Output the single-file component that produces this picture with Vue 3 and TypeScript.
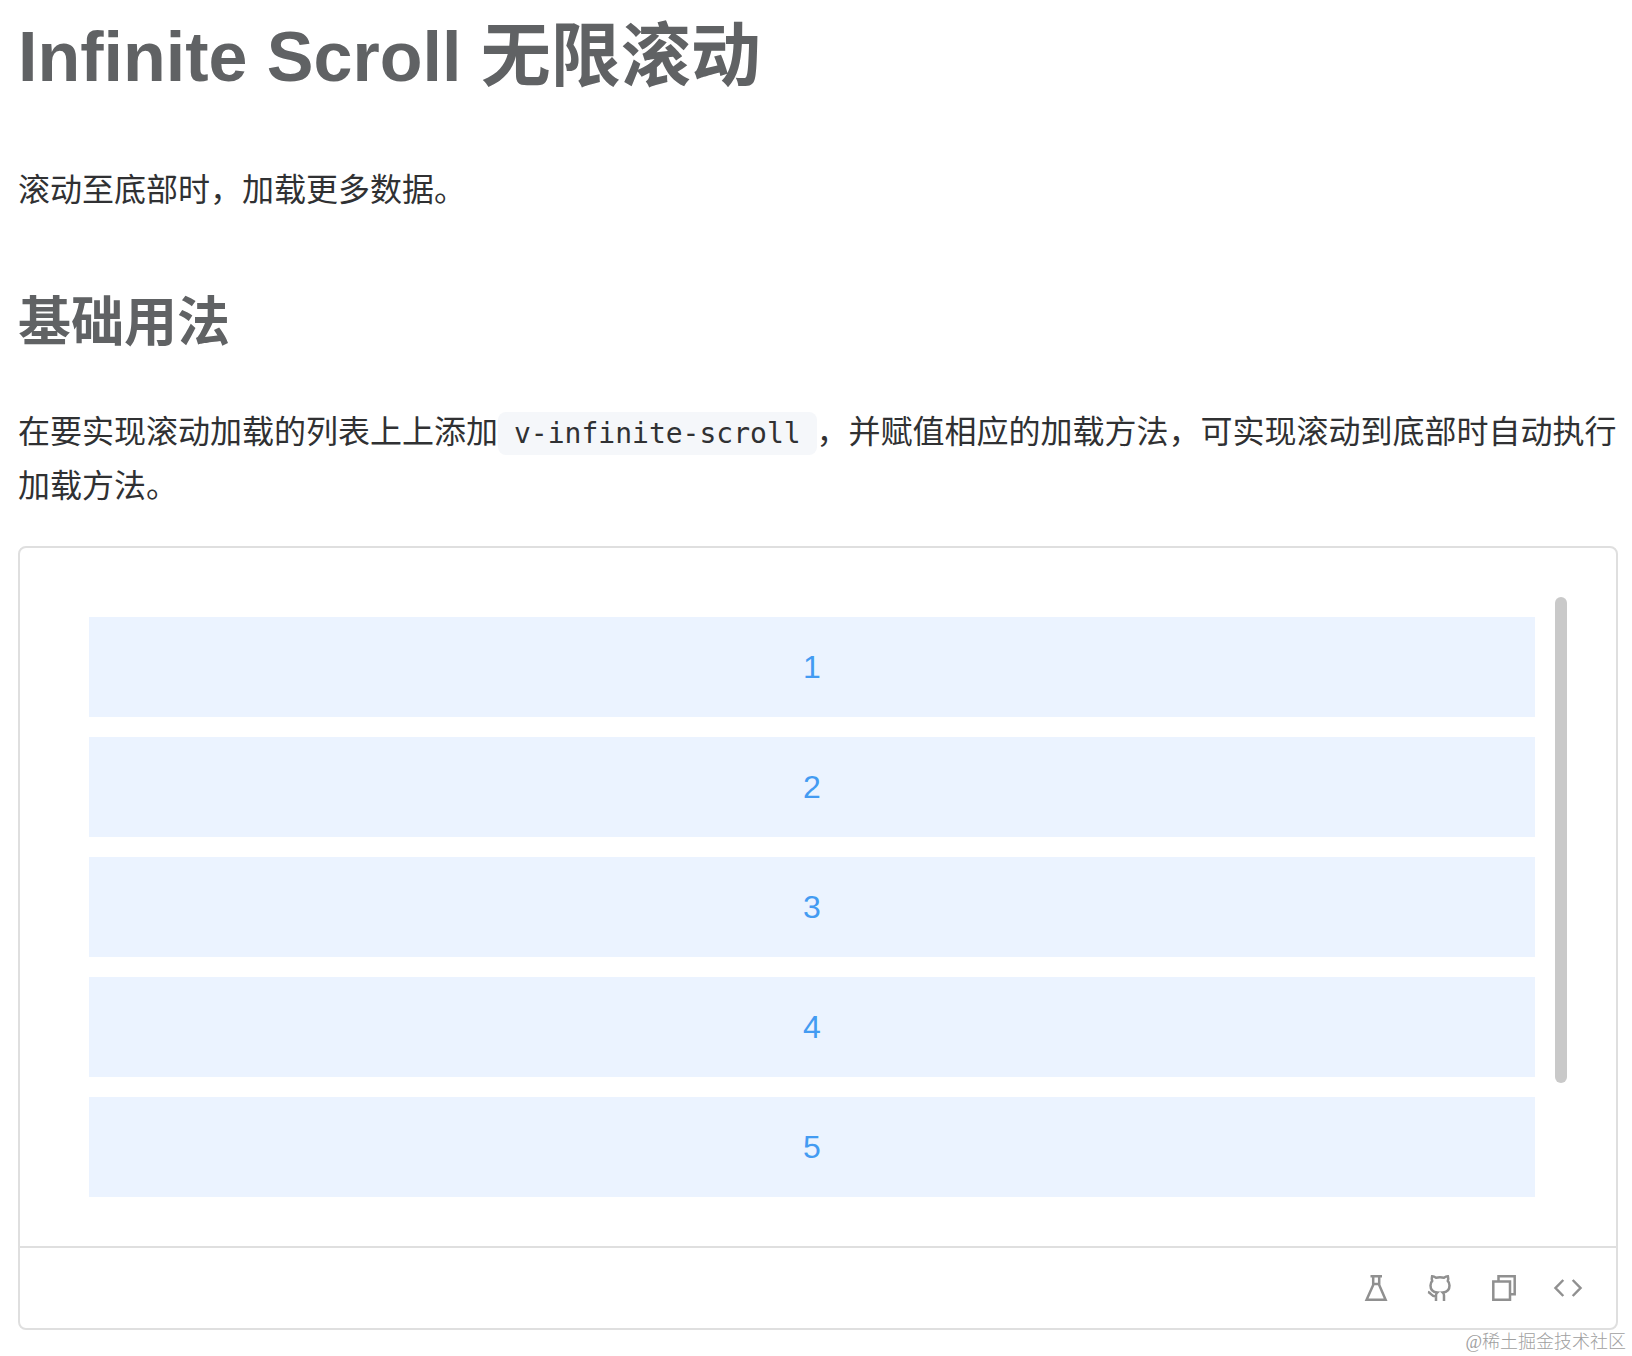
<script setup lang="ts">
import { computed, ref } from 'vue'

const ROW_STEP = 120
const LIST_HEIGHT = 600

const count = ref(5)
const scrollTop = ref(0)

// One spare row of space stays below the loaded rows so that there is always something to scroll into.
const contentHeight = computed(() => (count.value + 1) * ROW_STEP + 20)
const thumbHeight = computed(() => Math.round((LIST_HEIGHT * LIST_HEIGHT) / contentHeight.value))
const thumbTop = computed(() => Math.round((scrollTop.value * LIST_HEIGHT) / contentHeight.value))

function onScroll(event: Event) {
  const el = event.target as HTMLElement
  scrollTop.value = el.scrollTop
  if (el.scrollTop + el.clientHeight >= el.scrollHeight - 1) count.value += 2
}
</script>

<template>
  <main class="doc">
    <h1>Infinite Scroll 无限滚动</h1>
    <p class="intro">滚动至底部时，加载更多数据。</p>

    <h2>基础用法</h2>
    <p class="usage">在要实现滚动加载的列表上上添加<code>v-infinite-scroll</code>，并赋值相应的加载方法，可实现滚动到底部时自动执行加载方法。</p>

    <section class="example">
      <div class="showcase">
        <div class="scroller">
          <ul class="list" @scroll="onScroll">
            <li v-for="i in count" :key="i" class="item">{{ i }}</li>
          </ul>
          <div class="thumb" :style="{ height: thumbHeight + 'px', top: thumbTop + 'px' }"></div>
        </div>
      </div>
      <div class="actions">
        <button type="button" aria-label="Playground">
          <svg viewBox="0 0 32 32"><path d="M10.500 4.300h11.500M13.200 4.500v8.500L6.600 27.700h19L19.200 13v-8.500M13.200 12h6" /></svg>
        </button>
        <button type="button" aria-label="GitHub">
          <svg viewBox="0 0 32 32"><path d="M12 29v-5.500c0-1.300.4-2.300 1.200-3-4-.3-6.700-2.900-6.700-7 0-1.900.6-3.400 1.700-4.600-.5-1.600-.5-3.200-.1-4.700 1.600.1 2.800.7 3.900 1.500 2.700-.6 5.300-.6 8 0 1.100-.8 2.300-1.400 3.900-1.500.4 1.500.4 3.100-.1 4.700 1.100 1.200 1.700 2.700 1.700 4.600 0 4.100-2.700 6.700-6.700 7 .8.700 1.200 1.700 1.200 3V29M4 20c3.200.6 2.800 4.600 8 4.600" /></svg>
        </button>
        <button type="button" aria-label="Copy">
          <svg viewBox="0 0 32 32"><path d="M5.300 9.500h16.700v18.200H5.300zM10.500 9.500V4.300h16.200v17.900H22" /></svg>
        </button>
        <button type="button" aria-label="View source">
          <svg viewBox="0 0 32 32"><path d="M11.300 8L3.500 16l7.800 8M20.700 8l7.800 8-7.800 8" /></svg>
        </button>
      </div>
    </section>
    <footer class="credit">@稀土掘金技术社区</footer>
  </main>
</template>

<style>
body {
  margin: 0;
  background: #fff;
}
</style>

<style scoped>
.doc {
  padding: 9px 14px 0 18px;
  color: #303133;
  font-family: "Liberation Sans", "Noto Sans CJK SC", sans-serif;
  font-size: 32px;
  line-height: 54px;
}

h1,
h2 {
  margin: 0;
  color: #606264;
  font-weight: 700;
}

h1 {
  font-size: 70px;
  line-height: 96px;
}

h2 {
  margin-top: 72px;
  font-size: 53px;
  line-height: 68px;
}

p {
  margin: 0;
}

.intro {
  margin-top: 58px;
}

.usage {
  margin: 48px 0 33px;
}

code {
  padding: 5px 16px;
  border-radius: 8px;
  background: #f5f7fa;
  font-family: "DejaVu Sans Mono", monospace;
  font-size: 28px;
  line-height: 32px;
}

.example {
  border: 2px solid #dfdfdf;
  border-radius: 8px;
}

.showcase {
  padding: 49px;
}

.scroller {
  position: relative;
}

.list {
  box-sizing: border-box;
  height: 600px;
  margin: 0;
  padding: 20px 32px 120px 20px;
  overflow-y: auto;
  list-style: none;
  scrollbar-width: none;
}

.item {
  height: 100px;
  margin-bottom: 20px;
  background: #ebf3ff;
  color: #439bf2;
  line-height: 100px;
  text-align: center;
}

.thumb {
  position: absolute;
  right: 0;
  width: 12px;
  border-radius: 6px;
  background: #c9c9c9;
}

.actions {
  display: flex;
  justify-content: flex-end;
  gap: 32px;
  padding: 24px 32px;
  border-top: 2px solid #dfdfdf;
}

button {
  width: 32px;
  height: 32px;
  padding: 0;
  border: 0;
  background: none;
  cursor: pointer;
}

svg {
  display: block;
  width: 32px;
  height: 32px;
  fill: none;
  stroke: #909090;
  stroke-width: 2.500;
}

.credit {
  margin-right: -8px;
  color: #a0a0a0;
  font-family: "Liberation Serif", "Noto Sans CJK SC", serif;
  font-size: 18px;
  font-weight: 300;
  line-height: 24px;
  text-align: right;
}
</style>
